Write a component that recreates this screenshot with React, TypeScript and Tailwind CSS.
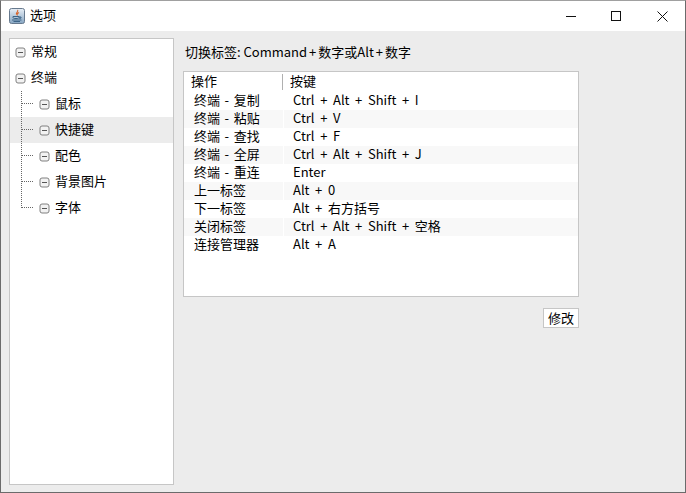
const font = { fontFamily: '"Noto Sans CJK SC", sans-serif' };

function Box() {
  return (
    <svg width="11" height="11" viewBox="0 0 11 11" className="shrink-0">
      <rect x="1" y="1" width="9" height="9" rx="2" fill="#f2f2f2" stroke="#808080" />
      <path d="M3 5.500h5" stroke="#555" />
    </svg>
  );
}

function Link({ last }: { last?: boolean }) {
  return (
    <svg width="18" height="26" viewBox="0 0 18 26" className="shrink-0">
      <path d={last ? "M.5 0V13" : "M.5 0V26"} stroke="#666" strokeDasharray="1 1" fill="none" />
      <path d="M1 12.500H13" stroke="#666" strokeDasharray="1 1" fill="none" />
    </svg>
  );
}

function Txt({ s, wide }: { s: string; wide?: boolean }) {
  const parts = s.split("+");
  return (
    <>
      {parts.map((p, i) => (
        <span key={i}>
          {p}
          {i < parts.length - 1 ? <span className={wide ? "mx-[2px]" : "mx-[1px]"}>+</span> : null}
        </span>
      ))}
    </>
  );
}

const kids = ["鼠标", "快捷键", "配色", "背景图片", "字体"];
const rows = [
  ["终端 - 复制", "Ctrl + Alt + Shift + I"],
  ["终端 - 粘贴", "Ctrl + V"],
  ["终端 - 查找", "Ctrl + F"],
  ["终端 - 全屏", "Ctrl + Alt + Shift + J"],
  ["终端 - 重连", "Enter"],
  ["上一标签", "Alt + 0"],
  ["下一标签", "Alt + 右方括号"],
  ["关闭标签", "Ctrl + Alt + Shift + 空格"],
  ["连接管理器", "Alt + A"],
];

export default function App() {
  return (
    <div style={font} className="w-[686px] h-[493px] flex flex-col border border-[#6b6b6b] border-t-[#a0a0a0] bg-[#ececec] text-[13px] text-black overflow-hidden">
      <div className="h-[30px] bg-white flex items-center shrink-0">
        <svg width="16" height="16" viewBox="0 0 16 16" className="ml-[8px]">
          <defs>
            <linearGradient id="j" x1="0" y1="0" x2="0" y2="1">
              <stop offset="0" stopColor="#e8eff6" />
              <stop offset="1" stopColor="#86a5c2" />
            </linearGradient>
          </defs>
          <rect x="0.5" y="0.5" width="15" height="15" rx="2" fill="url(#j)" stroke="#66798d" />
          <path d="M8.500 2c1.500 1.500-2 2.500-1 4.500M10 4.500c-1.500 1-2.500 1.500-1.500 3" stroke="#d8642a" strokeWidth="1.100" fill="none" />
          <path d="M4 8.500h6c.5 1.200-.5 2-1.800 2H5.800C4.500 10.500 3.500 9.700 4 8.500zM10 9h2v1.200h-2" fill="none" stroke="#3d6487" />
          <path d="M3 12h9.500M4.500 13.500h6.500" stroke="#3d6487" />
        </svg>
        <span className="ml-[5px] pb-[2px]">选项</span>
        <div className="ml-auto flex h-full items-center">
          <div className="w-[44px] h-full flex items-center justify-center">
            <svg width="10" height="10" viewBox="0 0 10 10"><path d="M0 5.500h10" stroke="#111" /></svg>
          </div>
          <div className="w-[46px] h-full flex items-center justify-center">
            <svg width="10" height="10" viewBox="0 0 10 10"><rect x=".5" y=".5" width="9" height="9" fill="none" stroke="#111" /></svg>
          </div>
          <div className="w-[46px] h-full flex items-center justify-center">
            <svg width="11" height="11" viewBox="0 0 11 11"><path d="M.5 .5l10 10M10.500 .5l-10 10" stroke="#111" /></svg>
          </div>
        </div>
      </div>
      <div className="flex-1 flex pl-[8px] pt-[7px] pb-[7px] min-h-0">
        <div className="w-[165px] bg-white border border-[#c6c6c6] shrink-0">
          <div className="h-[26px] flex items-center pl-[5px] gap-[5px]"><Box /><span className="pb-[2px]">常规</span></div>
          <div className="h-[26px] flex items-center pl-[5px] gap-[5px]"><Box /><span className="pb-[2px]">终端</span></div>
          {kids.map((k, i) => (
            <div key={k} className={`h-[26px] flex items-center pl-[11px] ${k === "快捷键" ? "bg-[#ececec]" : ""}`}>
              <Link last={i === kids.length - 1} />
              <Box />
              <span className="ml-[5px] pb-[2px]">{k}</span>
            </div>
          ))}
        </div>
        <div className="w-[396px] ml-[9px] flex flex-col shrink-0">
          <div className="h-[33px] flex items-center pl-[2px] pb-[5px]"><span><Txt s="切换标签: Command+数字或Alt+数字" wide /></span></div>
          <div className="h-[226px] bg-white border border-[#c6c6c6] shrink-0">
            <div className="h-[20px] flex items-center">
              <div className="w-[99px] h-[16px] pl-[7px] border-r border-[#b0b0b0] leading-[14px]">操作</div>
              <div className="pl-[7px] leading-[14px] h-[16px]">按键</div>
            </div>
            {rows.map((r, i) => (
              <div key={r[0]} className="h-[18px] flex leading-[16px] [word-spacing:1.7px]">
                <div className={`w-[99px] pl-[10px] mr-[1px] ${i % 2 ? "bg-[#f8f8f8]" : ""}`}>{r[0]}</div>
                <div className={`flex-1 pl-[9px] ${i % 2 ? "bg-[#f8f8f8]" : ""}`}><Txt s={r[1]} /></div>
              </div>
            ))}
          </div>
          <div className="flex justify-end mt-[11px]">
            <div className="w-[36px] h-[20px] bg-white border border-[#c6c6c6] flex items-center justify-center leading-none pb-[1px]">修改</div>
          </div>
        </div>
      </div>
    </div>
  );
}
